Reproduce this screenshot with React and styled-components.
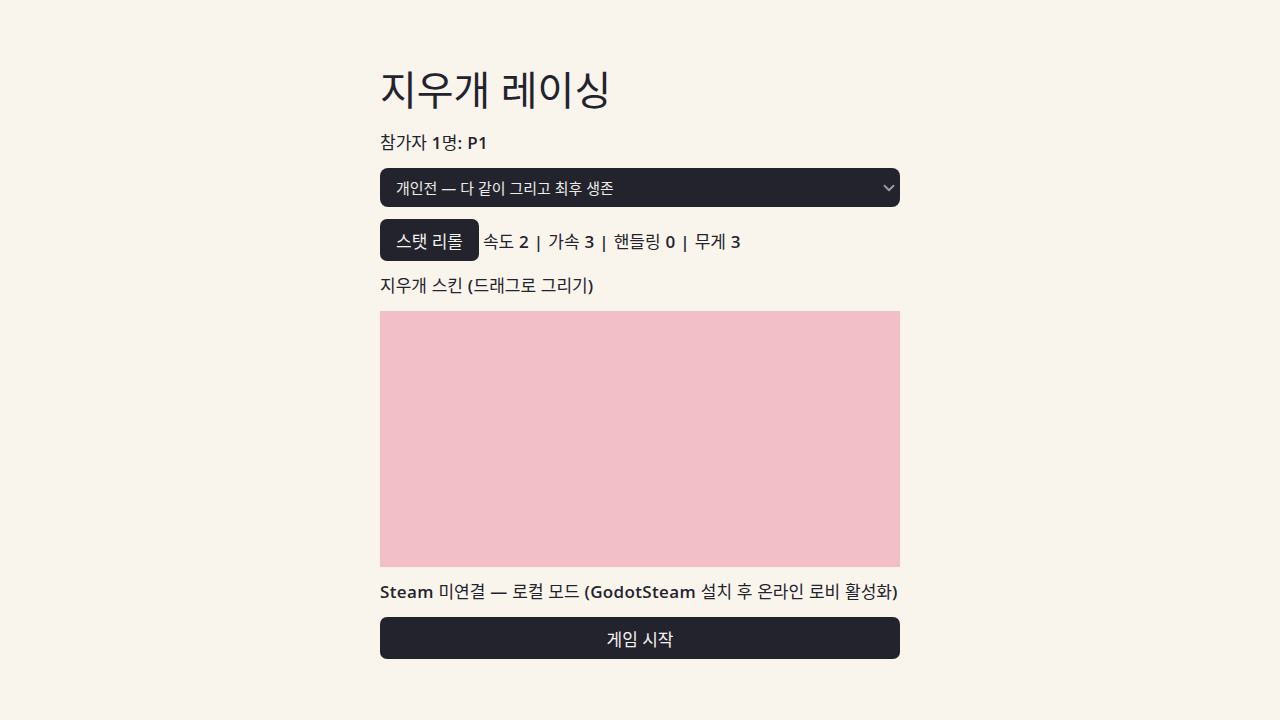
import { createGlobalStyle, styled } from "styled-components";
import { ChevronDown } from "lucide-react";

const fontStack = `"Open Sans", "Noto Sans CJK KR", sans-serif`;

const GlobalStyle = createGlobalStyle`
  html, body {
    margin: 0;
    background: #faf5ec;
  }
  body {
    font-family: ${fontStack};
    font-weight: 400;
    color: #23232e;
  }
`;

// Latin, digits and punctuation are semibold; Hangul stays regular
function Mixed({ text }) {
  return text.split(/([\uAC00-\uD7A3]+)/).map((part, i) =>
    /[\uAC00-\uD7A3]/.test(part) ? part : <Strong key={i}>{part}</Strong>
  );
}

export default function App() {
  return (
    <>
      <GlobalStyle />
      <Page>
        <Title>지우개 레이싱</Title>
        <Line>
          <Mixed text="참가자 1명: P1" />
        </Line>
        <SelectWrap>
          <ModeSelect defaultValue="solo">
            <option value="solo">개인전 — 다 같이 그리고 최후 생존</option>
            <option value="team">팀전</option>
          </ModeSelect>
          <Chevron size={18} strokeWidth={2.6} />
        </SelectWrap>
        <StatRow>
          <Button>스탯 리롤</Button>
          <span>
            <Mixed text="속도 2 | 가속 3 | 핸들링 0 | 무게 3" />
          </span>
        </StatRow>
        <Line>
          <Mixed text="지우개 스킨 (드래그로 그리기)" />
        </Line>
        <SkinCanvas />
        <Line>
          <Mixed text="Steam 미연결 — 로컬 모드 (GodotSteam 설치 후 온라인 로비 활성화)" />
        </Line>
        <Button $wide>게임 시작</Button>
      </Page>
    </>
  );
}

const Page = styled.main`
  width: 520px;
  margin: 0 auto;
  padding-top: 66px;
  display: flex;
  flex-direction: column;
  align-items: flex-start;
  gap: 12px;
`;

const Title = styled.h1`
  margin: 0 0 4px;
  font-size: 40px;
  font-weight: 400;
  line-height: 48px;
`;

const Strong = styled.span`
  font-weight: 600;
  letter-spacing: 0.35px;
`;

const Line = styled.div`
  font-size: 17px;
  line-height: 26px;
  white-space: nowrap;
`;

const SelectWrap = styled.div`
  position: relative;
  width: 100%;
`;

const ModeSelect = styled.select`
  display: block;
  width: 100%;
  height: 39px;
  padding: 0 32px 0 16px;
  border: none;
  border-radius: 8px;
  appearance: none;
  background: #23232e;
  color: #ecebe8;
  font-family: ${fontStack};
  font-size: 15px;
  font-weight: 400;
`;

const Chevron = styled(ChevronDown)`
  position: absolute;
  right: 2px;
  top: 11px;
  color: #9a99a3;
  pointer-events: none;
`;

const StatRow = styled.div`
  display: flex;
  align-items: center;
  gap: 4px;
  font-size: 17px;
  white-space: nowrap;
`;

const Button = styled.button`
  width: ${(p) => (p.$wide ? "100%" : "auto")};
  height: 42px;
  padding: 0 16px;
  border: none;
  border-radius: 7px;
  background: #23232e;
  color: #f4f2ee;
  font-family: ${fontStack};
  font-size: 17px;
  font-weight: 400;
  cursor: pointer;
`;

const SkinCanvas = styled.div`
  width: 520px;
  height: 256px;
  background: #f2bfc8;
`;
